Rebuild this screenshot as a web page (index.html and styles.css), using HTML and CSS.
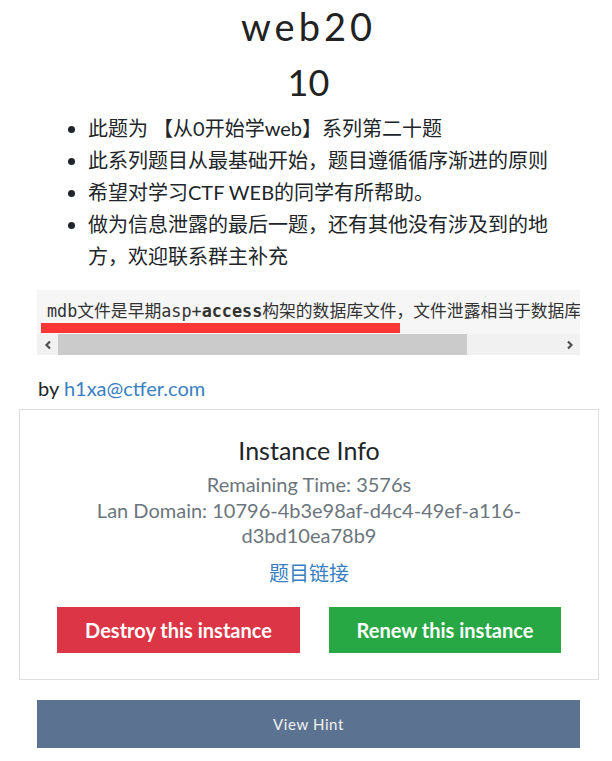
FILE: index.html
```html
<!DOCTYPE html>
<html>
<head>
<meta charset="utf-8">
<link rel="stylesheet" href="styles.css">
</head>
<body>
<div class="page">
  <h1 class="title">web20</h1>
  <h2 class="points">10</h2>
  <ul class="desc">
    <li>此题为 【从0开始学web】系列第二十题</li>
    <li>此系列题目从最基础开始，题目遵循循序渐进的原则</li>
    <li>希望对学习CTF WEB的同学有所帮助。</li>
    <li>做为信息泄露的最后一题，还有其他没有涉及到的地方，欢迎联系群主补充</li>
  </ul>
  <div class="code">
    <div class="code-text">mdb文件是早期asp+<b>access</b>构架的数据库文件，文件泄露相当于数据库被脱裤了。</div>
    <div class="mark"></div>
    <div class="scrollbar">
      <div class="sb-btn"><svg width="10" height="10" viewBox="0 0 10 10"><path d="M7 1.5 L3.5 5 L7 8.5" fill="none" stroke="#505050" stroke-width="2.2"/></svg></div>
      <div class="sb-thumb"></div>
      <div class="sb-track"></div>
      <div class="sb-btn"><svg width="10" height="10" viewBox="0 0 10 10"><path d="M3 1.5 L6.5 5 L3 8.5" fill="none" stroke="#505050" stroke-width="2.2"/></svg></div>
    </div>
  </div>
  <p class="author">by <a href="#">h1xa@ctfer.com</a></p>
</div>
<div class="card">
  <h3 class="card-title">Instance Info</h3>
  <p class="muted">Remaining Time: 3576s</p>
  <p class="muted domain">Lan Domain: 10796-4b3e98af-d4c4-49ef-a116-d3bd10ea78b9</p>
  <p class="link"><a href="#">题目链接</a></p>
  <div class="actions">
    <button class="btn btn-red">Destroy this instance</button>
    <button class="btn btn-green">Renew this instance</button>
  </div>
</div>
<div class="page">
  <button class="hint">View Hint</button>
</div>
</body>
</html>
```
FILE: styles.css
```css
* { box-sizing: border-box; }
body {
  margin: 0;
  font-family: Lato, "Noto Sans CJK SC", sans-serif;
  color: #212529;
  background: #fff;
}
.page {
  margin: 0 32px 0 37px;
}
.title {
  margin: 0;
  padding-top: 4px;
  text-align: center;
  font-weight: 400;
  font-size: 38px;
  line-height: 44px;
  letter-spacing: 4px;
  color: #222;
}
.points {
  margin: 12px 0 0;
  text-align: center;
  font-weight: 400;
  font-size: 36px;
  line-height: 44px;
  color: #222;
}
.desc {
  margin: 8px 20px 0 0;
  padding-left: 51px;
  font-size: 20px;
  line-height: 32px;
}
.code {
  position: relative;
  margin-top: 18px;
  background: #f6f6f6;
}
.code-text {
  padding: 9px 10px 11px;
  white-space: nowrap;
  overflow: hidden;
  font-family: "DejaVu Sans Mono", "Noto Sans CJK SC", monospace;
  font-size: 16.8px;
  line-height: 24px;
  color: #333;
}
.code-text b { font-weight: 700; }
.mark {
  position: absolute;
  left: 4px;
  top: 33px;
  width: 359px;
  height: 10px;
  background: #fc3535;
}
.scrollbar {
  display: flex;
  height: 21px;
  background: #f1f1f1;
}
.sb-btn {
  width: 21px;
  display: flex;
  align-items: center;
  justify-content: center;
}
.sb-thumb {
  width: 409px;
  background: #cbcbcb;
}
.sb-track { flex: 1; }
.author {
  margin: 20px 0 0 1px;
  font-size: 20px;
  line-height: 26px;
}
a { color: #3a7fc1; text-decoration: none; }
.card {
  margin: 8px 13px 0 19px;
  border: 1px solid #dfdfdf;
  padding: 24px 14px 26px;
  text-align: center;
}
.card-title {
  margin: 0;
  font-weight: 400;
  font-size: 25px;
  line-height: 32px;
}
.muted {
  margin: 6px 0 0;
  color: #6c757d;
  font-size: 20px;
  line-height: 25px;
}
.domain { margin-top: 1px; padding: 0 50px; }
.link {
  margin: 11px 0 0;
  font-size: 20px;
  line-height: 28px;
}
.actions {
  display: flex;
  justify-content: space-between;
  margin: 20px 23px 0;
}
.btn {
  border: 0;
  height: 46px;
  color: #fff;
  font-family: Lato, sans-serif;
  font-weight: 700;
  font-size: 20px;
}
.btn-red { background: #dc3545; width: 243px; }
.btn-green { background: #28a745; width: 232px; }
.hint {
  display: block;
  width: 543px;
  margin-top: 20px;
  height: 48px;
  border: 0;
  background: #5b7290;
  color: #f2f2f2;
  font-family: Lato, sans-serif;
  font-size: 15px;
  letter-spacing: 0.6px;
}
```
